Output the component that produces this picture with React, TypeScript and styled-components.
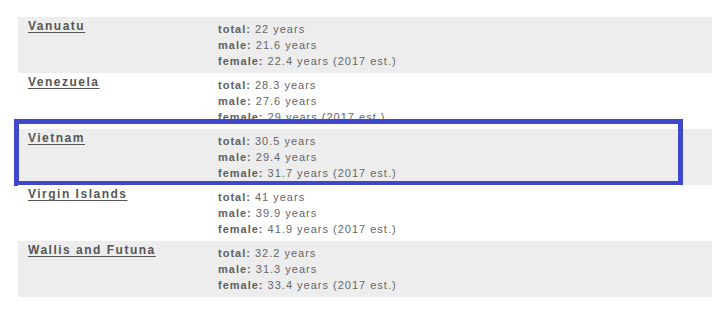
import React from 'react';
import styled, { createGlobalStyle } from 'styled-components';

type AgeEntry = {
  country: string;
  total: string;
  male: string;
  female: string;
  highlighted?: boolean;
};

const entries: AgeEntry[] = [
  { country: 'Vanuatu', total: '22 years', male: '21.6 years', female: '22.4 years (2017 est.)' },
  { country: 'Venezuela', total: '28.3 years', male: '27.6 years', female: '29 years (2017 est.)' },
  { country: 'Vietnam', total: '30.5 years', male: '29.4 years', female: '31.7 years (2017 est.)', highlighted: true },
  { country: 'Virgin Islands', total: '41 years', male: '39.9 years', female: '41.9 years (2017 est.)' },
  { country: 'Wallis and Futuna', total: '32.2 years', male: '31.3 years', female: '33.4 years (2017 est.)' },
];

const GlobalStyle = createGlobalStyle`
  html, body {
    margin: 0;
    padding: 0;
    background: #fff;
    overflow: hidden;
  }
  body {
    font-family: "Liberation Sans", Arial, sans-serif;
  }
`

const Page = styled.div`
  padding: 17px 0 0 18px;
`

const FieldTable = styled.div`
  display: flex;
  flex-direction: column;
`

const Row = styled.div<{ $shaded: boolean }>`
  position: relative;
  display: grid;
  grid-template-columns: 200px 1fr;
  height: 56px;
  box-sizing: border-box;
  background: ${({ $shaded }) => ($shaded ? '#ededed' : '#fff')};
`

const CountryLink = styled.a`
  display: block;
  padding: 1px 0 0 10px;
  font-size: 12px;
  line-height: 16px;
  font-weight: bold;
  letter-spacing: 1.5px;
  color: #555;
  text-decoration: underline;
  text-decoration-thickness: 1px;
  text-underline-offset: 2px;
  align-self: start;
  justify-self: start;
`

const Values = styled.div`
  padding: 4px 0;
  font-size: 11px;
  line-height: 16px;
  color: #666;
  letter-spacing: 1px;
`

const Line = styled.div`
  white-space: nowrap;
`

const Label = styled.strong`
  font-weight: bold;
  color: #5f5f5f;
`

const Highlight = styled.div`
  position: absolute;
  left: -4px;
  top: -10px;
  width: 669px;
  height: 67px;
  box-sizing: border-box;
  border: 5px solid #3f48cc;
  pointer-events: none;
`

const App = () => {
  return (
    <Page>
      <GlobalStyle />
      <FieldTable>
        {entries.map((entry, i) => (
          <Row key={entry.country} $shaded={i % 2 === 0}>
            <CountryLink href="#">{entry.country}</CountryLink>
            <Values>
              <Line><Label>total:</Label> {entry.total}</Line>
              <Line><Label>male:</Label> {entry.male}</Line>
              <Line><Label>female:</Label> {entry.female}</Line>
            </Values>
            {entry.highlighted && <Highlight />}
          </Row>
        ))}
      </FieldTable>
    </Page>
  );
};

export default App;
